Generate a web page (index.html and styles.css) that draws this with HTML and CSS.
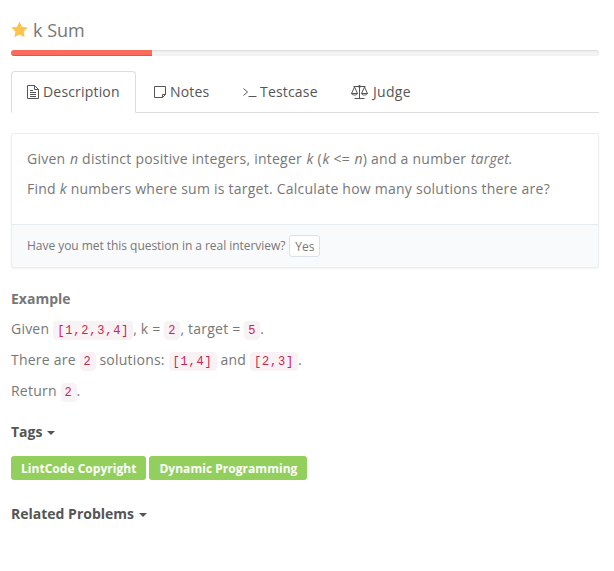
FILE: index.html
```html
<!DOCTYPE html>
<html lang="en">
<head>
<meta charset="utf-8">
<title>k Sum</title>
<link rel="stylesheet" href="styles.css">
</head>
<body>
<main class="page">
  <h1 class="title">
    <svg class="star" width="17" height="17" viewBox="0 0 17 17"><path d="M8.5.4 11 5.7l5.8.8-4.2 4 1 5.8-5.1-2.8-5.1 2.8 1-5.8-4.2-4L6 5.7z"/></svg>
    <span>k Sum</span>
  </h1>
  <div class="progress"><div class="bar"></div></div>
  <nav class="tabs">
    <a class="tab active"><svg width="13" height="16" viewBox="0 0 13 16"><path d="M.5 1.5h7l4 4v9H.5zM7.500 1.5v4h4M3 6.500h3M3 8.500h6M3 10.500h6M3 12.500h6"/></svg><span>Description</span></a>
    <a class="tab notes"><svg width="13" height="16" viewBox="0 0 13 16"><path d="M.5 2.5h11v8l-3 3h-8zM8.5 13.5v-3h3"/></svg><span>Notes</span></a>
    <a class="tab testcase"><svg width="14" height="16" viewBox="0 0 14 16"><path d="M.5 4.5 4.5 8l-4 3.5M5.5 12.5h8"/></svg><span>Testcase</span></a>
    <a class="tab judge"><svg width="18" height="16" viewBox="0 0 18 16"><path d="M2.500 2.500h12M8.500 1v13.500M3.500 14.500h10M3.500 3 .5 9.500h6L3.500 3M13.500 3l-3 6.500h6L13.500 3M.5 9.500c.5 2 5.500 2 6 0M10.500 9.500c.5 2 5.500 2 6 0"/><circle cx="8.500" cy="2.500" r="1"/></svg><span>Judge</span></a>
  </nav>
  <section class="panel">
    <div class="panel-body">
      <p class="lead">Given <em>n</em> distinct positive integers, integer <em>k</em> (<em>k</em> &lt;= <em>n</em>) and a number <em>target.</em></p>
      <p>Find <em>k</em> numbers where sum is target. Calculate how many solutions there are?</p>
    </div>
    <div class="panel-footer"><span>Have you met this question in a real interview?</span><button class="yes">Yes</button></div>
  </section>
  <section class="example">
    <h2>Example</h2>
    <p>Given <code>[1,2,3,4]</code>, k = <code>2</code>, target = <code>5</code>.</p>
    <p>There are <code>2</code> solutions: <code>[1,4]</code> and <code>[2,3]</code>.</p>
    <p>Return <code>2</code>.</p>
  </section>
  <h2 class="toggle">Tags <i class="caret"></i></h2>
  <div class="tags"><span class="tag">LintCode Copyright</span><span class="tag">Dynamic Programming</span></div>
  <h2 class="toggle">Related Problems <i class="caret"></i></h2>
</main>
</body>
</html>
```
FILE: styles.css
```css
* { box-sizing: border-box; }
body {
  margin: 0;
  background: #fff;
  color: #777;
  font: 14px/20px "Open Sans", sans-serif;
}
.page { padding: 18px 15px 0 11px; }
h1, h2, p { margin: 0; }
.title {
  display: flex;
  align-items: center;
  gap: 5px;
  height: 23px;
  font-size: 18px;
  font-weight: 400;
}
.star { fill: #fdc34d; }
.progress {
  height: 6px;
  margin-top: 9px;
  border-radius: 3px;
  background: #f3f3f3;
  box-shadow: inset 0 1px 2px rgba(0, 0, 0, .1);
  overflow: hidden;
}
.bar {
  width: 24%;
  height: 100%;
  background: #fb6b5b;
  box-shadow: inset 0 -1px 0 rgba(0, 0, 0, .15);
}
.tabs {
  display: flex;
  height: 42px;
  margin-top: 15px;
  border-bottom: 1px solid #ddd;
  color: #555;
  letter-spacing: .18px;
}
.tab {
  display: flex;
  align-items: center;
  gap: 4px;
  height: 42px;
  padding: 0 16px;
  border: 1px solid transparent;
  border-radius: 4px 4px 0 0;
}
.tab svg { flex: none; fill: none; stroke: #555; stroke-width: 1; }
.tab.active {
  width: 125px;
  padding: 0 15px;
  gap: 3px;
  background: #fff;
  border-color: #ddd;
  border-bottom-color: #fff;
}
.notes { width: 90px; padding: 0 17px; gap: 3px; }
.testcase { width: 108px; gap: 3px; }
.judge { width: 96px; padding: 0 16px; letter-spacing: .3px; }
.panel {
  margin-top: 20px;
  border: 1px solid #eaeef1;
  border-radius: 2px;
  box-shadow: 0 1px 2px rgba(0, 0, 0, .05);
}
.panel-body { height: 90px; padding: 15px 15px 0; letter-spacing: .24px; }
.panel-body p { margin-bottom: 10px; white-space: nowrap; }
.lead { letter-spacing: .235px; }
.lead em { margin-left: .7px; }
.panel-footer {
  display: flex;
  align-items: center;
  gap: 4px;
  height: 43px;
  padding: 0 15px;
  border-top: 1px solid #e4ebf1;
  background: #f9fafc;
  font-size: 12px;
  letter-spacing: -.04px;
}
.yes {
  width: 31px;
  height: 22px;
  padding: 1px 0 0;
  border: 1px solid #dbe1e8;
  border-radius: 3px;
  background: #fff;
  color: #777;
  font: 12px/18px "Open Sans", sans-serif;
}
.example { margin-top: 21px; }
h2 { font-size: 14px; line-height: 20px; font-weight: 700; }
.example p { height: 21px; margin-top: 10px; letter-spacing: .22px; }
code {
  padding: 3px 4px 2px;
  border-radius: 4px;
  background: #f9f2f4;
  color: #c7254e;
  font: 12px/20px "Liberation Mono", monospace;
  letter-spacing: .8px;
}
.toggle {
  display: flex;
  align-items: center;
  gap: 5px;
  margin-top: 20px;
  color: #555;
}
.caret {
  margin-top: 2px;
  border: 4px solid transparent;
  border-top-color: #555;
  border-bottom: 0;
}
.tags { display: flex; gap: 3px; margin: 14px 0 24px; }
.tag {
  height: 24px;
  padding: 0 10px;
  border-radius: 3px;
  background: #92cf5c;
  color: #fff;
  font-size: 12px;
  font-weight: 700;
  line-height: 25px;
  letter-spacing: .03px;
}
```
